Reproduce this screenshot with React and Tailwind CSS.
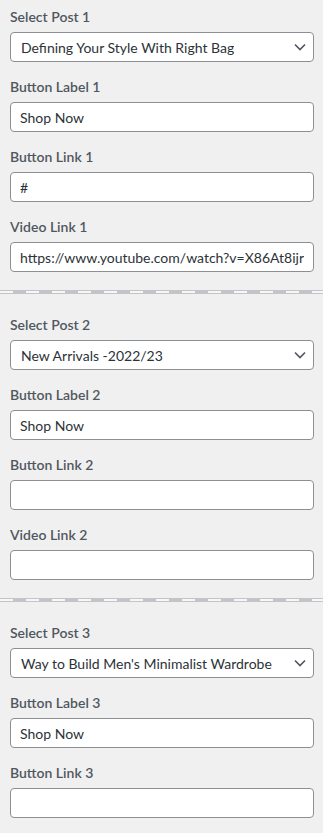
import { Fragment } from "react";

const sections = [
  {
    n: 1,
    post: "Defining Your Style With Right Bag",
    label: "Shop Now",
    link: "#",
    video: "https://www.youtube.com/watch?v=X86At8ijr7Q",
  },
  { n: 2, post: "New Arrivals -2022/23", label: "Shop Now", link: "", video: "" },
  { n: 3, post: "Way to Build Men's Minimalist Wardrobe", label: "Shop Now", link: "", video: null },
];

function Label({ children }) {
  return (
    <div className="mb-[5px] h-5 text-[14px] font-semibold leading-5 text-[#50575e]">
      {children}
    </div>
  );
}

function TextField({ label, value }) {
  return (
    <div className="mb-[15px]">
      <Label>{label}</Label>
      <input
        type="text"
        readOnly
        value={value}
        className="block h-[30px] w-full rounded-[4px] border border-[#8c8f94] bg-white px-[9px] text-[14px] text-[#2c3338] outline-none"
      />
    </div>
  );
}

function SelectField({ label, value }) {
  return (
    <div className="mb-[15px]">
      <Label>{label}</Label>
      <div className="flex h-[30px] w-full items-center justify-between rounded-[4px] border border-[#8c8f94] bg-white pl-[10px] pr-[7px] text-[14px] text-[#2c3338]">
        <span className="truncate">{value}</span>
        <svg width="12" height="8" viewBox="0 0 12 8" fill="none" className="ml-2 shrink-0">
          <path d="M1 1.5L6 6.5L11 1.5" stroke="#50575e" strokeWidth="1.6" />
        </svg>
      </div>
    </div>
  );
}

function Divider() {
  return (
    <div className="mb-[21px] mt-[3px] -ml-[10px] -mr-[9px] h-[4px] border-y border-[#c3c4c7] bg-[repeating-linear-gradient(90deg,#f6f7f7_0_13px,#c3c4c7_13px_26px)]" />
  );
}

export default function App() {
  return (
    <div
      className="flex min-h-screen flex-col bg-[#f0f0f1] pl-[10px] pr-[9px] pt-[7px] pb-4"
      style={{ fontFamily: 'Lato, "Noto Sans", sans-serif' }}
    >
      {sections.map((s, i) => (
        <Fragment key={s.n}>
          {i > 0 && <Divider />}
          <SelectField label={`Select Post ${s.n}`} value={s.post} />
          <TextField label={`Button Label ${s.n}`} value={s.label} />
          <TextField label={`Button Link ${s.n}`} value={s.link} />
          {s.video !== null && <TextField label={`Video Link ${s.n}`} value={s.video} />}
        </Fragment>
      ))}
    </div>
  );
}
